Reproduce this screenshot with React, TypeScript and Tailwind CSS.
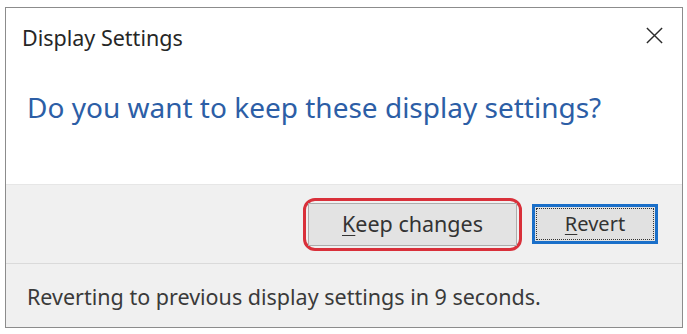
import React from 'react';

const font = { fontFamily: '"Noto Sans", "Open Sans", Arial, sans-serif' };

const App = () => {
  return (
    <div className="w-[687px] h-[334px] bg-white pl-[5px] pt-[7px]" style={font}>
      {/* Dialog */}
      <div className="w-[678px] h-[321px] border border-[#8c8c8c] flex flex-col bg-white">
        {/* Header */}
        <div className="h-[176px] relative pl-[16px] pt-[16px]">
          <div className="text-[21.5px] leading-[28px] text-[#262626]">Display Settings</div>
          <button className="absolute right-[18px] top-[18px] w-[19px] h-[19px] text-[#2b2b2b]">
            <svg viewBox="0 0 20 20" className="w-[19px] h-[19px]">
              <path d="M2 2 L18 18 M18 2 L2 18" stroke="currentColor" strokeWidth="1.5" />
            </svg>
          </button>
          <div className="mt-[36px] pl-[5px] text-[28px] leading-[38px] text-[#2c5ea6]">
            Do you want to keep these display settings?
          </div>
        </div>

        {/* Buttons */}
        <div className="h-[79px] bg-[#f0f0f0] border-t border-[#e6e6e6] flex items-center justify-end gap-[10px] pr-[24px]">
          <div className="rounded-[12px] border-[3px] border-[#d9303a] p-[2px]">
            <button className="w-[209px] h-[43px] bg-[#e3e3e3] border border-[#adadad] text-[21.5px] text-[#333]">
              <span className="underline underline-offset-[3px] decoration-1">K</span>eep changes
            </button>
          </div>
          <button className="w-[126px] h-[40px] bg-[#e1e1e1] border-[3px] border-[#1a6fc9] p-[1px]">
            <span className="flex items-center justify-center w-full h-full border border-dotted border-[#333] text-[20px] text-[#333]">
              <span className="underline underline-offset-[3px] decoration-1">R</span>evert
            </span>
          </button>
        </div>

        {/* Footer */}
        <div className="flex-1 bg-[#f0f0f0] border-t border-[#dadada] flex items-center pl-[21px] pt-[3px]">
          <span className="text-[21.5px] text-[#3a3a3a]">Reverting to previous display settings in 9 seconds.</span>
        </div>
      </div>
    </div>
  );
};

export default App;
